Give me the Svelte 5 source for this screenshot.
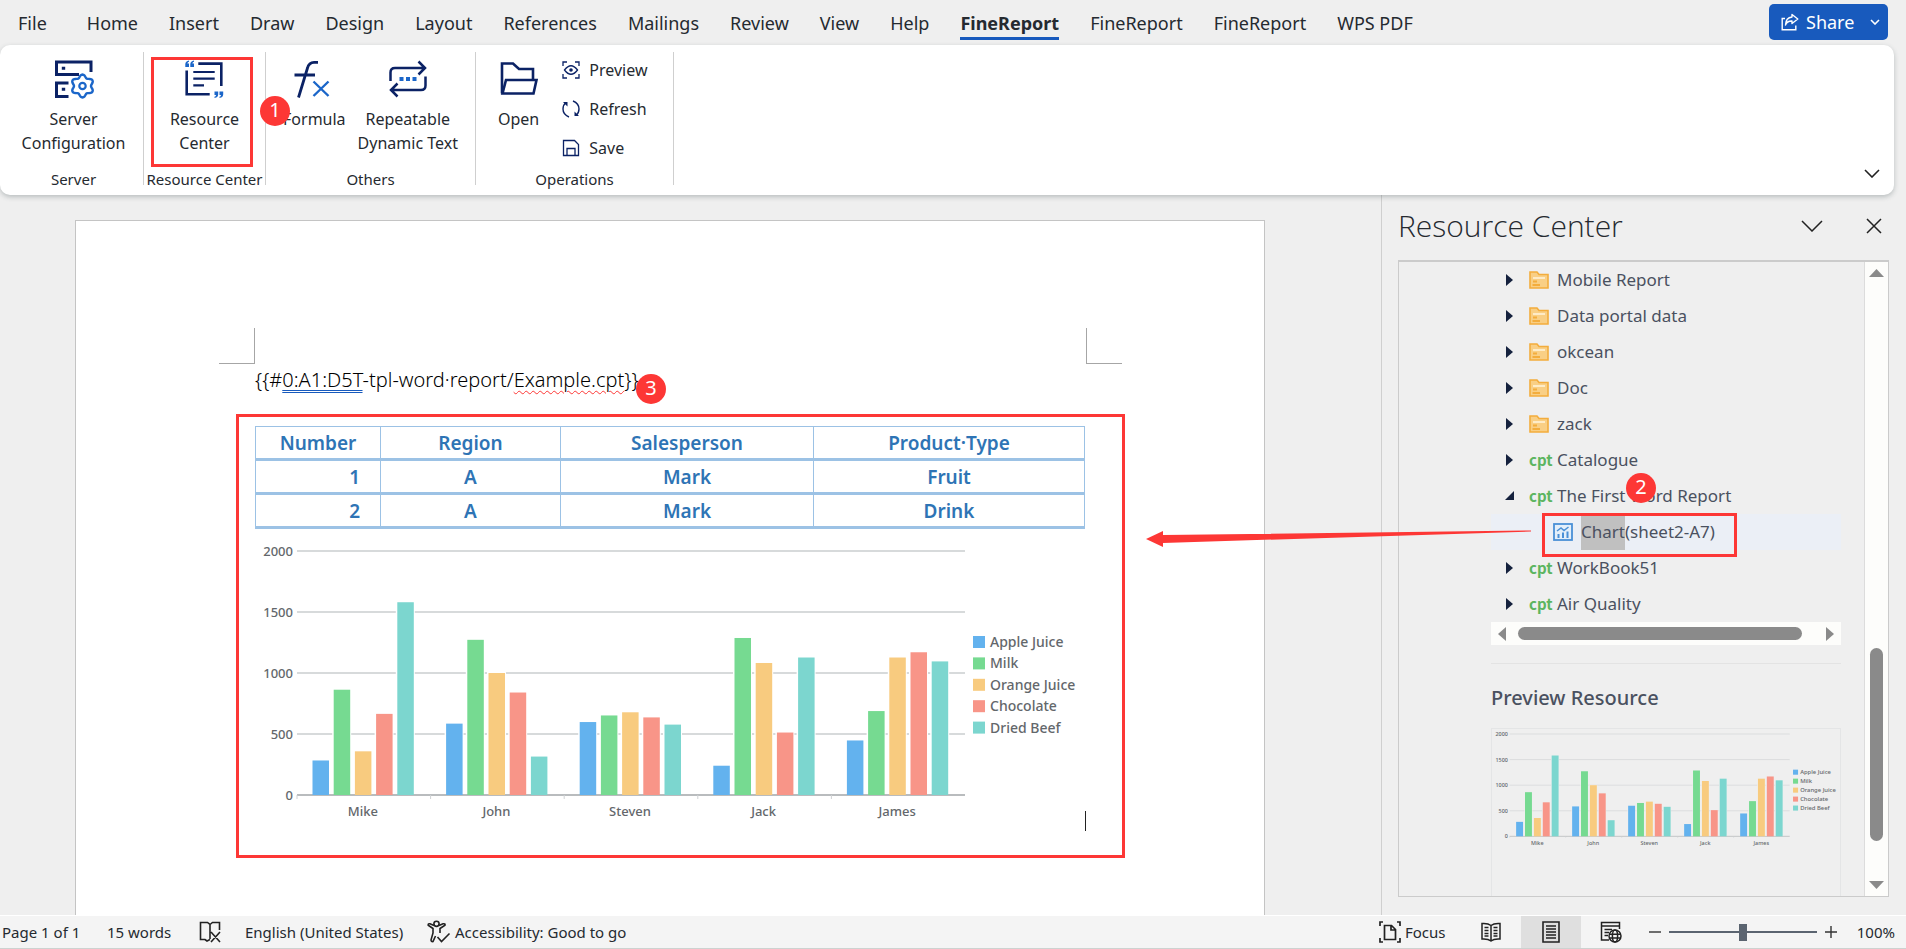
<script>
  const tabs = [
    'File', 'Home', 'Insert', 'Draw', 'Design', 'Layout', 'References', 'Mailings',
    'Review', 'View', 'Help', 'FineReport', 'FineReport', 'FineReport', 'WPS PDF'
  ];
  const activeTab = 11;

  const rows = [
    ['1', 'A', 'Mark', 'Fruit'],
    ['2', 'A', 'Mark', 'Drink']
  ];

  const series = [
    { name: 'Apple Juice', color: '#63b2ee' },
    { name: 'Milk', color: '#76da91' },
    { name: 'Orange Juice', color: '#f8cb7f' },
    { name: 'Chocolate', color: '#f89588' },
    { name: 'Dried Beef', color: '#7cd6cf' }
  ];
  const people = [
    { name: 'Mike', values: [283, 863, 358, 665, 1580] },
    { name: 'John', values: [585, 1272, 1000, 840, 315] },
    { name: 'Steven', values: [598, 652, 678, 636, 577] },
    { name: 'Jack', values: [240, 1287, 1082, 512, 1127] },
    { name: 'James', values: [447, 688, 1127, 1170, 1095] }
  ];
  const ticks = [2000, 1500, 1000, 500, 0];
  const plot = { left: 42, right: 710, top: 12, bottom: 256 };
  const band = (plot.right - plot.left) / people.length;
  const y = (v) => plot.bottom - (v / 2000) * (plot.bottom - plot.top);

  const tree = [
    { label: 'Mobile Report', kind: 'folder' },
    { label: 'Data portal data', kind: 'folder' },
    { label: 'okcean', kind: 'folder' },
    { label: 'Doc', kind: 'folder' },
    { label: 'zack', kind: 'folder' },
    { label: 'Catalogue', kind: 'cpt' },
    { label: 'The First Word Report', kind: 'cpt', open: true },
    { label: '(sheet2-A7)', marked: 'Chart', kind: 'chart' },
    { label: 'WorkBook51', kind: 'cpt' },
    { label: 'Air Quality', kind: 'cpt' }
  ];

  let gear = '';
  for (let i = 0; i < 72; i++) {
    const a = (i / 72) * Math.PI * 2;
    const r = 10 + 1.5 * Math.cos(6 * (a - Math.PI / 2));
    gear += `${(28.5 + r * Math.cos(a)).toFixed(2)},${(27 + r * Math.sin(a)).toFixed(2)} `;
  }

  let zoom = $state(50);
</script>

{#snippet barChart(title)}
  <svg class="chart" viewBox="0 0 830 290" role="img" aria-label={title}>
    {#each ticks as t}
      <line x1={plot.left} x2={plot.right} y1={y(t)} y2={y(t)} stroke={t ? '#d7dadb' : '#b9bcbe'} stroke-width="2" />
      <text class="axis" x="38" y={y(t) + 5} text-anchor="end">{t}</text>
    {/each}
    {#each people as p, i}
      <line x1={plot.left + band * i} x2={plot.left + band * i} y1={plot.bottom} y2={plot.bottom + 4} stroke="#cfd2d4" />
      {#each p.values as v, j}
        <rect class="gap" x={plot.left + band * i + 14 + j * 21.2} y={y(v) - 1} width="19" height={plot.bottom - y(v)} />
        <rect x={plot.left + band * i + 15.5 + j * 21.2} y={y(v)} width="16.5" height={plot.bottom - y(v)} fill={series[j].color} />
      {/each}
      <text class="axis" x={plot.left + band * (i + 0.5) - 1} y="277" text-anchor="middle">{p.name}</text>
    {/each}
    {#each series as s, i}
      <rect x="718" y={97 + i * 21.4} width="12" height="12" fill={s.color} />
      <text class="legend" x="735" y={108 + i * 21.4}>{s.name}</text>
    {/each}
  </svg>
{/snippet}

<div class="app">
  <nav class="tabs" aria-label="Ribbon tabs">
    {#each tabs as tab, i}
      <button class="tab" class:active={i === activeTab}>{tab}</button>
    {/each}
    <button class="share">
      <svg width="18" height="18" viewBox="0 0 18 18" fill="none" stroke="#fff" stroke-width="1.4">
        <path d="M4 5.5H1.2V16.8H14.8V12.5" />
        <path d="M11 1.5L16.8 6L11 10.5V8Q6 7.8 4.5 12Q4.8 4.6 11 4Z" stroke-linejoin="round" />
      </svg>
      <span>Share</span>
      <svg class="share-more" width="10" height="6" viewBox="0 0 10 6" fill="none" stroke="#fff" stroke-width="1.6"><path d="M1 1L5 5L9 1" /></svg>
    </button>
  </nav>

  <section class="ribbon" aria-label="FineReport ribbon">
    <div class="group server">
      <div class="tools">
        <button class="tool">
          <svg width="40" height="40" viewBox="0 0 40 40" fill="none" stroke="#0b2265" stroke-width="3">
            <path d="M37 13V3H2.5V15.5H25M14.5 24H2.5V37.5H14.5" />
            <path d="M7.8 9.3H11.2M7.8 30.3H11.2" />
            <polygon points={gear} stroke="#1b66c9" stroke-width="2.4" />
            <circle cx="28.5" cy="27" r="3.2" stroke="#1b66c9" stroke-width="2.2" />
          </svg>
          <span>Server<br />Configuration</span>
        </button>
      </div>
      <div class="caption">Server</div>
    </div>

    <div class="group resource">
      <div class="tools">
        <button class="tool">
          <svg width="40" height="40" viewBox="0 0 40 40" fill="none" stroke="#0b2265" stroke-width="2.6">
            <path d="M14.3 4.6H37.3V27M2.7 11.5V35.3H25.7" />
            <path d="M9.3 13H30.7M9.3 19.7H30.7M9.3 26.3H20" stroke-width="2.2" />
            <path d="M5 1.5Q1.5 2 1.3 5V8H5V4.6H3.4Q3.6 3 5 2.8ZM10 1.5Q6.5 2 6.3 5V8H10V4.6H8.4Q8.6 3 10 2.8Z" fill="#1b66c9" stroke="none" />
            <path d="M30.5 39Q34 38.5 34.2 35.5V32.5H30.5V35.9H32.1Q31.9 37.5 30.5 37.7ZM35.5 39Q39 38.5 39.2 35.5V32.5H35.5V35.9H37.1Q36.9 37.5 35.5 37.7Z" fill="#1b66c9" stroke="none" />
          </svg>
          <span>Resource<br />Center</span>
        </button>
      </div>
      <div class="caption">Resource Center</div>
      <div class="mark-box"></div>
      <div class="badge one">1</div>
    </div>

    <div class="group others">
      <div class="tools">
        <button class="tool">
          <svg width="40" height="40" viewBox="0 0 40 40" fill="none" stroke="#0b2265" stroke-width="2.8">
            <path d="M24 3.3H20Q15 3.3 13.5 9L4.5 38.5M0.5 16H21" />
            <path d="M19.5 22.5L34.5 37M34.5 22.5L19.5 37" stroke="#1b66c9" stroke-width="2.4" />
          </svg>
          <span>Formula</span>
        </button>
        <button class="tool">
          <svg width="40" height="40" viewBox="0 0 40 40" fill="none" stroke="#0b2265" stroke-width="2.5">
            <path d="M2.5 22V13.5Q2.5 9 7 9H37M30.5 2.5L37 9L30.5 15.5" />
            <path d="M37.5 17.5V26.5Q37.5 31 33 31H3M9.5 24.5L3 31L9.5 37.5" />
            <path d="M11.5 20H15.5M18 20H22M24.5 20H28.5" stroke="#1b66c9" stroke-width="4" />
          </svg>
          <span>Repeatable<br />Dynamic Text</span>
        </button>
      </div>
      <div class="caption">Others</div>
    </div>

    <div class="group ops">
      <div class="tools">
        <button class="tool">
          <svg width="40" height="40" viewBox="0 0 40 40" fill="none" stroke="#0b2265" stroke-width="2.6">
            <path d="M3 34.5V4.5H14L20 10H34V21" />
            <path d="M7 21H37.5L34.5 34.5H3.5Z" />
          </svg>
          <span>Open</span>
        </button>
        <div class="list">
          <button class="mini">
            <svg width="18" height="18" viewBox="0 0 18 18" fill="none" stroke="#0b2265" stroke-width="1.3">
              <path d="M1 5V1H5M13 1H17V5M17 13V17H13M5 17H1V13" />
              <path d="M2.5 9Q9 0.5 15.5 9Q9 17.5 2.5 9Z" /><circle cx="9" cy="9" r="1.8" fill="#0b2265" stroke="none" />
            </svg>
            Preview
          </button>
          <button class="mini">
            <svg width="18" height="18" viewBox="0 0 18 18" fill="none" stroke="#0b2265" stroke-width="1.4">
              <path d="M7 17Q1 14.5 1 9Q1 5 4 2.5M11 1Q17 3.5 17 9Q17 13 14 15.5" />
              <path d="M1 2H5.5V6.5ZM17 16H12.5V11.5Z" fill="#0b2265" stroke="none" />
            </svg>
            Refresh
          </button>
          <button class="mini">
            <svg width="18" height="18" viewBox="0 0 18 18" fill="none" stroke="#0b2265" stroke-width="1.3">
              <path d="M1.5 1.5H12.5L16.5 5.5V16.5H1.5Z" /><path d="M5 16.5V9.5H13V16.5" />
            </svg>
            Save
          </button>
        </div>
      </div>
      <div class="caption">Operations</div>
    </div>
    <button class="collapse" aria-label="Collapse ribbon">
      <svg width="16" height="9" viewBox="0 0 16 9" fill="none" stroke="#222" stroke-width="1.6"><path d="M1 1L8 8L15 1" /></svg>
    </button>
  </section>

  <main>
    <article class="page">
      <div class="corners"><i class="corner left"></i><i class="corner right"></i></div>
      <p class="field">&#123;&#123;#<span class="grammar">0:A1:D5T</span>-tpl-word·report/<span class="spell">Example.cpt</span>&#125;&#125;<span class="badge three">3</span></p>
      <figure>
        <table>
          <thead>
            <tr><th class="num">Number</th><th class="region">Region</th><th class="person">Salesperson</th><th>Product·Type</th></tr>
          </thead>
          <tbody>
            {#each rows as row}
              <tr>{#each row as cell, i}<td class:right={i === 0}>{cell}</td>{/each}</tr>
            {/each}
          </tbody>
        </table>
        {@render barChart('Sales by person')}
        <i class="caret"></i>
      </figure>
    </article>

    <aside>
      <header>
        <h1>Resource Center</h1>
        <button class="icon" aria-label="Task pane options">
          <svg width="22" height="12" viewBox="0 0 22 12" fill="none" stroke="#222" stroke-width="1.5"><path d="M1 1L11 11L21 1" /></svg>
        </button>
        <button class="icon" aria-label="Close">
          <svg width="16" height="16" viewBox="0 0 16 16" fill="none" stroke="#222" stroke-width="1.5"><path d="M1 1L15 15M15 1L1 15" /></svg>
        </button>
      </header>
      <div class="pane">
        <div class="content">
          <ul>
            {#each tree as item}
              <li class:selected={item.kind === 'chart'}>
                <button class="node" class:child={item.kind === 'chart'}>
                  {#if item.kind !== 'chart'}
                    <svg class="twist" width="9" height="12" viewBox="0 0 9 12" fill="#15213d">
                      {#if item.open}<path d="M9 1V10H0Z" />{:else}<path d="M1 0L8 6L1 12Z" />{/if}
                    </svg>
                  {/if}
                  {#if item.kind === 'folder'}
                    <svg width="20" height="18" viewBox="0 0 20 18">
                      <path d="M1 1H8L10 3.5H19V17H1Z" fill="#f9cf85" stroke="#f3ad3d" stroke-width="1.6" />
                      <path d="M4 7H16" stroke="#fff3d8" stroke-width="1.6" />
                      <path d="M4 10.5H8M3.5 14H11" stroke="#f3ad3d" stroke-width="1.8" />
                    </svg>
                  {:else if item.kind === 'cpt'}
                    <span class="cpt">cpt</span>
                  {:else}
                    <svg width="20" height="18" viewBox="0 0 20 18" fill="none" stroke="#4a90d6">
                      <rect x="1" y="1" width="18" height="16" stroke-width="1.8" fill="#e3effa" />
                      <path d="M4 8L8 5L11 7.5L15.5 4" stroke-width="1.5" />
                      <path d="M5.5 15V11M10 15V9.5M14.5 15V8.5" stroke-width="2" />
                    </svg>
                  {/if}
                  <span>{#if item.marked}<mark>{item.marked}</mark>{/if}{item.label}</span>
                </button>
                {#if item.open}<span class="badge two">2</span>{/if}
                {#if item.kind === 'chart'}<span class="mark-box row-box"></span>{/if}
              </li>
            {/each}
          </ul>
          <div class="hscroll">
            <svg width="8" height="14" viewBox="0 0 8 14"><path d="M8 0V14L0 7Z" fill="#8a8a8a" /></svg>
            <i></i>
            <svg width="8" height="14" viewBox="0 0 8 14"><path d="M0 0V14L8 7Z" fill="#8a8a8a" /></svg>
          </div>
          <hr />
          <h2>Preview Resource</h2>
          <div class="preview">{@render barChart('Preview of the sales chart')}</div>
        </div>
        <div class="vscroll">
          <svg width="15" height="8" viewBox="0 0 15 8"><path d="M0 8H15L7.5 0Z" fill="#8a8a8a" /></svg>
          <i></i>
          <svg width="15" height="8" viewBox="0 0 15 8"><path d="M0 0H15L7.5 8Z" fill="#8a8a8a" /></svg>
        </div>
      </div>
      <svg class="arrow" width="390" height="20" viewBox="0 0 390 20"><path d="M0 10L17 2V6L385 1.5V2.5L17 14V18Z" fill="#fd3735" /></svg>
    </aside>
  </main>

  <footer>
    <button class="stat pages">Page 1 of 1</button>
    <button class="stat words">15 words</button>
    <button class="stat proof" aria-label="Proofing">
      <svg width="23" height="22" viewBox="0 0 23 22" fill="none" stroke="#222" stroke-width="1.6">
        <path d="M11 18.5L8 20L6 18.5H1.5V1.5H8.5L11 3.5V18M11 3.5L13.5 1.5H20.5V9M12 11L21 21M21 11L12 21" />
      </svg>
    </button>
    <button class="stat lang">English (United States)</button>
    <button class="stat access">
      <svg width="24" height="24" viewBox="0 0 24 24" fill="none" stroke="#222" stroke-width="1.6">
        <circle cx="9.5" cy="3.8" r="2.6" />
        <path d="M7 5.5L3 3.8Q1 3.5 1.2 5.2L6 8.5V13L4 20Q4.2 22 6 21.5L8.5 16M12 5.5L16 3.8Q18.5 3.5 18 5.2L13 8.5V13M10.5 17L14.5 21.5L22.5 13.5" />
      </svg>
      Accessibility: Good to go
    </button>
    <span class="space"></span>
    <button class="stat focus">
      <svg width="22" height="22" viewBox="0 0 22 22" fill="none" stroke="#222" stroke-width="1.7">
        <path d="M4 1H1V5M18 1H21V5M21 17V21H18M4 21H1V17" />
        <path d="M5.5 4.5H12.5L16.5 8.5V18.5H5.5ZM12 4.5V9H16.5" />
      </svg>
      Focus
    </button>
    <button class="view" aria-label="Read mode">
      <svg width="20" height="20" viewBox="0 0 20 20" fill="none" stroke="#222" stroke-width="1.5">
        <path d="M10 3.5Q7 1 1 1.5V17Q7 16.5 10 19Q13 16.5 19 17V1.5Q13 1 10 3.5V19" />
        <path d="M3.5 5.5H7.5M3.5 8.5H7.5M3.5 11.5H7.5M3.5 14H7.5M12.5 5.5H16.5M12.5 8.5H16.5M12.5 11.5H16.5M12.5 14H16.5" />
      </svg>
    </button>
    <button class="view on" aria-label="Print layout">
      <svg width="18" height="22" viewBox="0 0 18 22" fill="none" stroke="#222" stroke-width="1.6">
        <path d="M1 1H17V21H1Z" /><path d="M4 5H14M4 8H14M4 11H14M4 14H14M4 17H14" />
      </svg>
    </button>
    <button class="view" aria-label="Web layout">
      <svg width="22" height="22" viewBox="0 0 22 22" fill="none" stroke="#222" stroke-width="1.5">
        <path d="M9 19H1.5V1.5H19.5V8M1.5 5H19.5M4.5 8.5H12M4.5 11.5H9M4.5 14.5H8" />
        <circle cx="15" cy="15" r="6" /><ellipse cx="15" cy="15" rx="2.6" ry="6" /><path d="M9 13.2H21M9 17H21" />
      </svg>
    </button>
    <button class="step" aria-label="Zoom out"><svg width="12" height="12" viewBox="0 0 12 12" stroke="#333" stroke-width="1.4"><path d="M0 6H12" /></svg></button>
    <input type="range" min="0" max="100" bind:value={zoom} aria-label="Zoom" />
    <button class="step" aria-label="Zoom in"><svg width="12" height="12" viewBox="0 0 12 12" stroke="#333" stroke-width="1.4"><path d="M0 6H12M6 0V12" /></svg></button>
    <button class="stat percent">100%</button>
  </footer>
</div>

<style>
  :global(body) { margin: 0; }
  * { box-sizing: border-box; }
  .app {
    height: 100vh;
    display: flex;
    flex-direction: column;
    overflow: hidden;
    background: #efefef;
    color: #252a30;
    font-family: 'Noto Sans', 'Open Sans', sans-serif;
  }
  button { font: inherit; color: inherit; background: none; border: 0; padding: 0; cursor: pointer; white-space: nowrap; }
  svg { display: block; flex: none; }

  .tabs { flex: none; height: 45px; display: flex; align-items: flex-start; gap: 31px; padding: 4px 18px; font-size: 18px; }
  .tab { height: 36px; padding-top: 5px; line-height: 28px; border-bottom: 3px solid transparent; }
  .tab:first-child { margin-right: 9px; }
  .tab.active { font-weight: 700; border-color: #185abd; }
  .share {
    margin-left: auto; width: 119px; height: 36px; padding: 0 8px 0 12px;
    display: flex; align-items: center; gap: 7px;
    border-radius: 5px; background: #185abd; color: #fff;
  }
  .share-more { margin-left: auto; }

  .ribbon {
    position: relative; z-index: 1; flex: none; height: 150px; margin-right: 12px; padding: 7px 0 10px;
    display: flex; border-radius: 10px; background: #fff;
    box-shadow: 0 2px 5px rgba(60, 75, 80, 0.3);
  }
  .group { position: relative; display: flex; flex-direction: column; justify-content: space-between; border-right: 1px solid #cfcfcf; }
  .server { width: 144px; padding-left: 4px; }
  .resource { width: 122px; }
  .others { width: 210px; }
  .ops { width: 198px; }
  .tools { display: flex; justify-content: center; align-items: flex-start; font-size: 16px; line-height: 24px; }
  .tool { padding-top: 7px; display: flex; flex-direction: column; align-items: center; gap: 8px; }
  .others .tools { gap: 12px; }
  .ops .tools { justify-content: flex-start; padding-left: 22px; gap: 23px; }
  .list { display: flex; flex-direction: column; gap: 15px; padding-top: 6px; }
  .mini { display: flex; align-items: center; gap: 9px; }
  .caption { text-align: center; font-size: 15px; line-height: 20px; margin-bottom: -4px; white-space: nowrap; }
  .collapse { position: absolute; right: 14px; bottom: 17px; }

  .mark-box { position: absolute; left: 7px; top: 5px; width: 102px; height: 110px; border: 3px solid #fd3735; pointer-events: none; }
  .badge {
    position: absolute; z-index: 2; width: 30px; height: 30px; border-radius: 50%;
    background: #fd3735; color: #fff; font-size: 20px; line-height: 28px; text-align: center;
  }
  .one { left: 116px; top: 44px; }

  main { flex: 1; min-height: 0; display: flex; }
  .page {
    flex: 1; min-width: 0; margin: 25px 116px 0 75px; padding: 107px 139px 0 143px;
    border: 1px solid #c4c4c4; border-bottom: 0; background: #fff; overflow: hidden;
  }
  .corners { display: flex; justify-content: space-between; margin-right: 3px; }
  .corner { width: 36px; height: 36px; border-bottom: 1px solid #a6a6a6; }
  .left { border-right: 1px solid #a6a6a6; }
  .corner.right { border-left: 1px solid #a6a6a6; }
  .field {
    position: relative; width: max-content; margin: 0 0 18px 36px; color: #000;
    font-size: 20px; line-height: 32px; font-weight: 300;
  }
  .grammar { text-decoration: underline double #185abd; text-underline-offset: 3px; text-decoration-thickness: 1px; }
  .spell { text-decoration: underline wavy #fd3735; text-underline-offset: 3px; text-decoration-thickness: 1px; }
  .three { left: 381px; top: 10px; font-weight: 400; }
  figure { position: relative; height: 444px; margin: 0 0 0 17px; padding: 9px 37px 0 16px; border: 3px solid #fd3735; }
  table {
    width: 100%; border-collapse: collapse; table-layout: fixed; color: #2e74b5;
    font-size: 19px; line-height: 28px; font-weight: 600;
  }
  th, td { height: 34px; padding: 1px 20px 0; border: 1px solid #9cc2e5; border-bottom-width: 3px; text-align: center; }
  th { height: 33px; font-weight: 600; }
  .num { width: 125px; }
  .region { width: 180px; }
  .person { width: 253px; }
  td.right { text-align: right; }
  .chart { width: 100%; height: auto; margin-top: 10px; font-family: 'Noto Sans', sans-serif; }
  .gap { fill: #fff; }
  .axis { font-size: 13px; font-weight: 500; fill: #63676b; }
  .legend { font-size: 14px; font-weight: 500; fill: #63676b; }
  .caret { position: absolute; right: 36px; bottom: 24px; width: 1px; height: 20px; background: #222; }

  aside { position: relative; flex: none; width: 525px; padding: 0 17px 18px 16px; display: flex; flex-direction: column; border-left: 1px solid #cfcfcf; }
  header { flex: none; height: 65px; padding: 0 7px 4px 0; display: flex; align-items: center; gap: 43px; }
  h1 { flex: 1; margin: 0; font-family: 'Open Sans', 'Noto Sans', sans-serif; font-size: 30px; font-weight: 350; line-height: 40px; }
  .pane { flex: 1; min-height: 0; display: flex; border: 1px solid #cbcbcb; border-top-width: 2px; overflow: hidden; }
  .content { flex: 1; min-width: 0; padding: 0 23px 0 92px; border-right: 1px solid #dcdcdc; color: #4a5160; }
  ul { margin: 0; padding: 0; list-style: none; font-size: 17px; }
  li { position: relative; height: 36px; display: flex; }
  .selected { background: #ebeff6; }
  .node { flex: 1; display: flex; align-items: center; gap: 8px; padding-left: 14px; line-height: 36px; }
  .child { padding-left: 62px; }
  .twist { margin-right: 7px; }
  .cpt { width: 20px; color: #5cb55f; font-family: 'Noto Sans CJK SC', Lato, sans-serif; font-size: 15px; font-weight: 700; }
  mark { display: inline-block; height: 36px; background: #c0c0c0; color: inherit; }
  .two { left: 135px; top: -5px; }
  .row-box { left: 51px; top: -1px; width: 195px; height: 44px; z-index: 1; }
  .hscroll { height: 23px; padding: 0 7px; display: flex; align-items: center; background: #fdfdfb; }
  .hscroll i { flex: 1; height: 13px; margin: 0 24px 0 12px; border-radius: 7px; background: #8a8a8a; }
  hr { margin: 18px 0 0; border: 0; border-top: 1px solid #e3e3e3; }
  h2 { margin: 20px 0 16px; font-size: 20px; font-weight: 500; line-height: 28px; }
  .preview { height: 220px; border: 1px solid #e4e5e6; }
  .preview .chart { margin: 0; }
  .preview .gap { fill: #efefef; }
  .vscroll { flex: none; width: 23px; padding: 7px 0; display: flex; flex-direction: column; align-items: center; background: #fdfdfb; }
  .vscroll i { width: 13px; height: 193px; margin: auto 0 40px; border-radius: 7px; background: #8a8a8a; }
  .arrow { position: absolute; left: -236px; top: 334px; pointer-events: none; }

  footer {
    flex: none; height: 34px; display: flex; align-items: center; padding: 0 11px 0 2px;
    background: #f4f4f4; border-top: 1px solid #fff; border-bottom: 1px solid #cdd2d0; font-size: 15px;
  }
  .stat { display: flex; align-items: center; }
  .pages { width: 105px; }
  .words { width: 92px; }
  .proof { width: 46px; }
  .lang { width: 182px; }
  .access, .focus { gap: 4px; }
  .space { flex: 1; }
  .focus { width: 82px; }
  .view { width: 60px; height: 32px; display: flex; align-items: center; justify-content: center; }
  .on { background: #dfdfdf; }
  .step { padding: 0 8px; }
  .percent { width: 46px; justify-content: flex-end; margin-left: 4px; }
  input { appearance: none; width: 148px; height: 20px; margin: 0; background: linear-gradient(#5b6470, #5b6470) center / 100% 2px no-repeat; }
  input::-webkit-slider-thumb { appearance: none; width: 8px; height: 17px; background: #5b6470; }
</style>
